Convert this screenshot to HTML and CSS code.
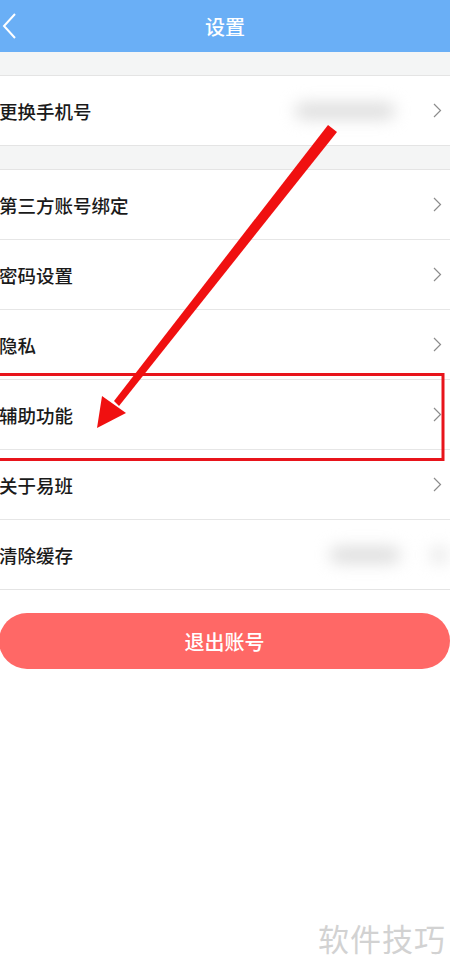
FILE: index.html
```html
<!DOCTYPE html>
<html lang="zh-CN">
<head>
    <meta charset="UTF-8">
    <meta name="viewport" content="width=device-width, initial-scale=1.0">
    <title>设置</title>
    <link rel="stylesheet" href="styles.css">
</head>
<body>
    <div class="page">
        <!-- 顶部导航 -->
        <div class="top-bar">
            <svg class="back-icon" width="16" height="26" viewBox="0 0 16 26">
                <path d="M13 1 L2 13 L13 25" fill="none" stroke="#fff" stroke-width="2"/>
            </svg>
            <span class="title">设置</span>
        </div>

        <div class="gap"></div>
        <div class="group">
            <div class="row">
                <span class="row-name">更换手机号</span>
                <span class="blur-value phone"></span>
                <svg class="arrow" width="9" height="15" viewBox="0 0 9 15"><path d="M1 1 L7.5 7.5 L1 14" fill="none" stroke="#8c8c8c" stroke-width="1.2"/></svg>
            </div>
        </div>

        <div class="gap"></div>
        <div class="group">
            <div class="row"><span class="row-name">第三方账号绑定</span><svg class="arrow" width="9" height="15" viewBox="0 0 9 15"><path d="M1 1 L7.5 7.5 L1 14" fill="none" stroke="#8c8c8c" stroke-width="1.2"/></svg></div>
            <div class="row"><span class="row-name">密码设置</span><svg class="arrow" width="9" height="15" viewBox="0 0 9 15"><path d="M1 1 L7.5 7.5 L1 14" fill="none" stroke="#8c8c8c" stroke-width="1.2"/></svg></div>
            <div class="row"><span class="row-name">隐私</span><svg class="arrow" width="9" height="15" viewBox="0 0 9 15"><path d="M1 1 L7.5 7.5 L1 14" fill="none" stroke="#8c8c8c" stroke-width="1.2"/></svg></div>
            <div class="row"><span class="row-name">辅助功能</span><svg class="arrow" width="9" height="15" viewBox="0 0 9 15"><path d="M1 1 L7.5 7.5 L1 14" fill="none" stroke="#8c8c8c" stroke-width="1.2"/></svg></div>
            <div class="row"><span class="row-name">关于易班</span><svg class="arrow" width="9" height="15" viewBox="0 0 9 15"><path d="M1 1 L7.5 7.5 L1 14" fill="none" stroke="#8c8c8c" stroke-width="1.2"/></svg></div>
            <div class="row">
                <span class="row-name">清除缓存</span>
                <span class="blur-value cache"></span>
                <span class="blur-value cache-arrow"></span>
            </div>
        </div>

        <div class="logout-wrap">
            <button class="logout-btn">退出账号</button>
        </div>

        <div class="watermark">软件技巧</div>

        <!-- 标注 -->
        <svg class="mark" width="450" height="974" viewBox="0 0 450 974">
            <rect x="-10" y="374.5" width="453" height="85" fill="none" stroke="#e8141b" stroke-width="3"/>
            <polygon points="328,125 337,132 119,406 114,401" fill="#f01010"/>
            <polygon points="97,428 102,396 126,413" fill="#f01010"/>
        </svg>
    </div>
</body>
</html>
```

FILE: styles.css
```css
/* 基础样式 */
body {
    margin: 0;
    font-family: "Noto Sans CJK SC", "Noto Sans", sans-serif;
    background: #fff;
}

.page {
    position: relative;
    width: 450px;
    height: 974px;
    overflow: hidden;
}

/* 顶部导航 */
.top-bar {
    height: 52px;
    background: #6aaff6;
    display: flex;
    align-items: center;
    justify-content: center;
    position: relative;
}

.back-icon {
    position: absolute;
    left: 2px;
    top: 13px;
}

.title {
    color: #fff;
    font-size: 20px;
    font-weight: 500;
}

.gap {
    height: 23px;
    background: #f4f5f5;
    border-bottom: 1px solid #e4e4e4;
}

.group {
    background: #fff;
    border-bottom: 1px solid #e4e4e4;
}

.row {
    height: 69px;
    display: flex;
    align-items: center;
    border-bottom: 1px solid #e6e6e6;
}

.row:last-child {
    border-bottom: none;
}

.row-name {
    flex: 1;
    font-size: 18.5px;
    font-weight: 500;
    color: #1a1a1a;
    margin-left: -1px;
}

.arrow {
    margin-right: 8px;
}

.blur-value {
    height: 16px;
    border-radius: 8px;
    background: #dcdcdc;
    filter: blur(8px);
}

.phone {
    width: 100px;
    margin-right: 38px;
}

.cache {
    width: 70px;
    margin-right: 30px;
}

.cache-arrow {
    width: 18px;
    margin-right: 2px;
    background: #e6e6e6;
}

/* 退出按钮 */
.logout-wrap {
    padding-top: 23px;
}

.logout-btn {
    display: block;
    width: 451px;
    height: 56px;
    margin-left: -1px;
    border: none;
    border-radius: 28px;
    background: #ff6866;
    color: #fff;
    font-family: inherit;
    font-size: 20px;
    font-weight: 500;
}

.watermark {
    position: absolute;
    right: 4px;
    bottom: 14px;
    font-size: 31px;
    color: #d2d2d2;
    letter-spacing: 1px;
}

.mark {
    position: absolute;
    left: 0;
    top: 0;
    pointer-events: none;
}
```
